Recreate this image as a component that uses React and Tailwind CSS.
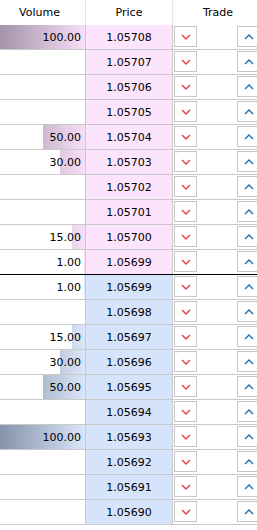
import React from "react";

const asks = [
  [100, "1.05708"],
  [0, "1.05707"],
  [0, "1.05706"],
  [0, "1.05705"],
  [50, "1.05704"],
  [30, "1.05703"],
  [0, "1.05702"],
  [0, "1.05701"],
  [15, "1.05700"],
  [1, "1.05699"],
];
const bids = [
  [1, "1.05699"],
  [0, "1.05698"],
  [15, "1.05697"],
  [30, "1.05696"],
  [50, "1.05695"],
  [0, "1.05694"],
  [100, "1.05693"],
  [0, "1.05692"],
  [0, "1.05691"],
  [0, "1.05690"],
];

function Down() {
  return (
    <svg width="10" height="6" viewBox="0 0 10 6">
      <polyline points="1,1 5,5 9,1" fill="none" stroke="#e2403f" strokeWidth="1.4" />
    </svg>
  );
}
function Up() {
  return (
    <svg width="10" height="6" viewBox="0 0 10 6">
      <polyline points="1,5 5,1 9,5" fill="none" stroke="#1f6fb5" strokeWidth="1.4" />
    </svg>
  );
}

function Row({ vol, price, side, last }) {
  const isAsk = side === "ask";
  return (
    <div
      className={`flex h-[25px] border-b ${
        last ? "border-black" : "border-[#c9c9c9]"
      }`}
    >
      <div className="relative w-[86px] shrink-0 border-r border-[#c9c9c9] overflow-hidden">
        {vol > 0 && (
          <div
            className="absolute right-0 top-0 bottom-0 overflow-hidden"
            style={{ width: `${vol}%` }}
          >
            <div
              className={`absolute right-0 top-0 bottom-0 w-[85px] ${
                isAsk
                  ? "bg-gradient-to-r from-[#a393a9] to-[#f8dff8]"
                  : "bg-gradient-to-r from-[#8693aa] to-[#dbe6f8]"
              }`}
            />
          </div>
        )}
        {vol > 0 && (
          <div className="relative flex h-full items-center justify-end pr-[4px]">
            {vol.toFixed(2)}
          </div>
        )}
      </div>
      <div
        className={`w-[87px] shrink-0 border-r border-[#c9c9c9] flex items-center justify-center ${
          isAsk ? "bg-[#fce4fc]" : "bg-[#d6e4fb]"
        }`}
      >
        {price}
      </div>
      <div className="flex flex-1 overflow-hidden pl-[1px] pt-[1px] gap-[40px]">
        <div className="w-[23px] h-[21px] shrink-0 border border-[#c6c6c6] bg-white flex items-center justify-center">
          <Down />
        </div>
        <div className="w-[23px] h-[21px] shrink-0 border border-[#c6c6c6] bg-white flex items-center justify-center">
          <Up />
        </div>
      </div>
    </div>
  );
}

export default function App() {
  return (
    <div className="w-[257px] h-[530px] overflow-hidden bg-white text-black font-['DejaVu_Sans',sans-serif] text-[11px] leading-none">
      <div className="flex h-[25px]">
        <div className="w-[86px] shrink-0 border-r border-[#e6e6e6] flex items-center justify-center pr-[6px]">
          Volume
        </div>
        <div className="w-[87px] shrink-0 border-r border-[#e6e6e6] flex items-center justify-center">
          Price
        </div>
        <div className="flex-1 flex items-center justify-center pl-[6px]">
          Trade
        </div>
      </div>
      {asks.map(([v, p], i) => (
        <Row key={"a" + i} vol={v} price={p} side="ask" last={i === asks.length - 1} />
      ))}
      {bids.map(([v, p], i) => (
        <Row key={"b" + i} vol={v} price={p} side="bid" last={false} />
      ))}
    </div>
  );
}
